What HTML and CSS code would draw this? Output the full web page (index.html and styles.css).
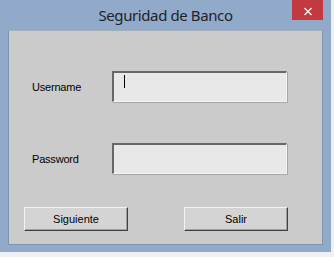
FILE: index.html
```
<!DOCTYPE html>
<html lang="es">
<head>
  <meta charset="UTF-8">
  <title>Seguridad de Banco</title>
  <link rel="stylesheet" href="styles.css">
</head>
<body>

  <!-- DIALOG WINDOW -->
  <div class="window">
    <div class="titlebar">
      <span class="title">Seguridad de Banco</span>
      <div class="close">
        <svg width="10" height="9" viewBox="0 0 10 9">
          <path d="M1.5 1 L8.5 8 M8.5 1 L1.5 8" stroke="#f4e6e6" stroke-width="1.6"/>
        </svg>
      </div>
    </div>

    <div class="client">
      <div class="form">
        <label class="label">Username</label>
        <div class="field"><span class="caret"></span></div>
        <label class="label">Password</label>
        <div class="field"></div>
      </div>

      <div class="buttons">
        <button class="btn">Siguiente</button>
        <button class="btn">Salir</button>
      </div>
    </div>
  </div>

</body>
</html>
```

FILE: styles.css
```
/* Page behind the dialog */
body {
  margin: 0;
  padding: 0;
  background: #eef0f2;
  font-family: 'Liberation Sans', Arial, sans-serif;
  font-size: 11px;
  color: #000;
}

/* Window frame (Windows 8 style light blue) */
.window {
  position: relative;
  width: 331px;
  height: 252px;
  background: #91aaca;
  box-sizing: border-box;
  padding: 0 8px 7px 8px;
  display: flex;
  flex-direction: column;
}

.titlebar {
  height: 30px;
  display: flex;
  justify-content: center;
  align-items: center;
}

.title {
  font-family: 'Noto Sans', 'Open Sans', sans-serif;
  font-size: 15px;
  letter-spacing: -0.4px;
  color: #1e2228;
  margin-top: -1px;
}

/* Close button sits over the frame, top right */
.close {
  position: absolute;
  top: 0;
  right: 8px;
  width: 31px;
  height: 20px;
  background: #c2393f;
  display: flex;
  justify-content: center;
  align-items: center;
}

.close svg {
  display: block;
  margin-top: 2px;
}

/* Grey client area */
.client {
  flex: 1;
  background: #cbcbcb;
  border: 1px solid #7f94b0;
  border-top-color: #a3aebb;
  box-sizing: border-box;
}

.form {
  display: grid;
  grid-template-columns: 80px 175px;
  grid-auto-rows: 31px;
  row-gap: 41px;
  padding: 40px 0 0 23px;
  align-items: center;
}

.label {
  color: #000;
  letter-spacing: -0.2px;
}

/* Sunken text boxes */
.field {
  height: 31px;
  box-sizing: border-box;
  background: #e8e8e8;
  border-top: 2px solid #676767;
  border-left: 2px solid #676767;
  border-right: 1px solid #f4f4f4;
  border-bottom: 1px solid #f4f4f4;
  box-shadow: 1px 1px 0 #a6a6a6;
  padding: 2px 0 0 10px;
}

.caret {
  display: block;
  width: 1px;
  height: 13px;
  background: #000;
}

/* Raised push buttons */
.buttons {
  display: flex;
  gap: 56px;
  padding: 33px 0 0 15px;
}

.btn {
  width: 104px;
  height: 24px;
  margin: 0;
  padding: 0;
  background: #d4d4d4;
  font-family: 'Liberation Sans', Arial, sans-serif;
  font-size: 11px;
  color: #000;
  border-top: 1px solid #f2f2f2;
  border-left: 1px solid #f2f2f2;
  border-right: 1px solid #404040;
  border-bottom: 1px solid #404040;
  box-shadow: inset -1px -1px 0 #a0a0a0;
}
```
